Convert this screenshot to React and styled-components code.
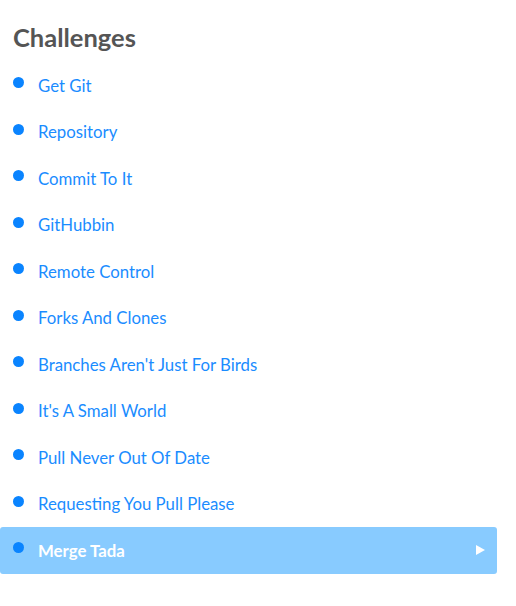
import React from 'react'
import styled, { createGlobalStyle } from 'styled-components'

const GlobalStyle = createGlobalStyle`
  body {
    margin: 0;
    background: #fff;
    font-family: Lato, "Open Sans", sans-serif;
  }
`

const Panel = styled.div`
  width: 497px;
  padding-top: 22px;
`

const Heading = styled.h2`
  margin: 0 0 9px 13px;
  font-size: 25.5px;
  line-height: 31px;
  font-weight: 700;
  color: #555;
`

const List = styled.ul`
  list-style: none;
  margin: 0;
  padding: 0;
`

const Item = styled.li`
  display: flex;
  align-items: center;
  height: 46.5px;
  padding: 0 12px 0 13px;
  border-radius: 3px;
  background: ${p => (p.$active ? '#88cbff' : 'transparent')};
  color: ${p => (p.$active ? '#fff' : '#1a8cff')};
  font-size: 16.8px;
  font-weight: ${p => (p.$active ? 700 : 400)};
  box-sizing: border-box;
`

const Bullet = styled.span`
  width: 11px;
  height: 11px;
  border-radius: 50%;
  background: #0a84ff;
  margin: 0 14px 5px 0;
  flex-shrink: 0;
`

const Label = styled.span`
  flex: 1;
`

const Arrow = styled.span`
  width: 0;
  height: 0;
  border-top: 5px solid transparent;
  border-bottom: 5px solid transparent;
  border-left: 9px solid #fff;
`

const challenges = [
  'Get Git',
  'Repository',
  'Commit To It',
  'GitHubbin',
  'Remote Control',
  'Forks And Clones',
  "Branches Aren't Just For Birds",
  "It's A Small World",
  'Pull Never Out Of Date',
  'Requesting You Pull Please',
  'Merge Tada',
]

const App = () => (
  <Panel>
    <GlobalStyle />
    <Heading>Challenges</Heading>
    <List>
      {challenges.map((name, i) => {
        const active = i === challenges.length - 1
        return (
          <Item key={name} $active={active}>
            <Bullet />
            <Label>{name}</Label>
            {active && <Arrow />}
          </Item>
        )
      })}
    </List>
  </Panel>
)

export default App
